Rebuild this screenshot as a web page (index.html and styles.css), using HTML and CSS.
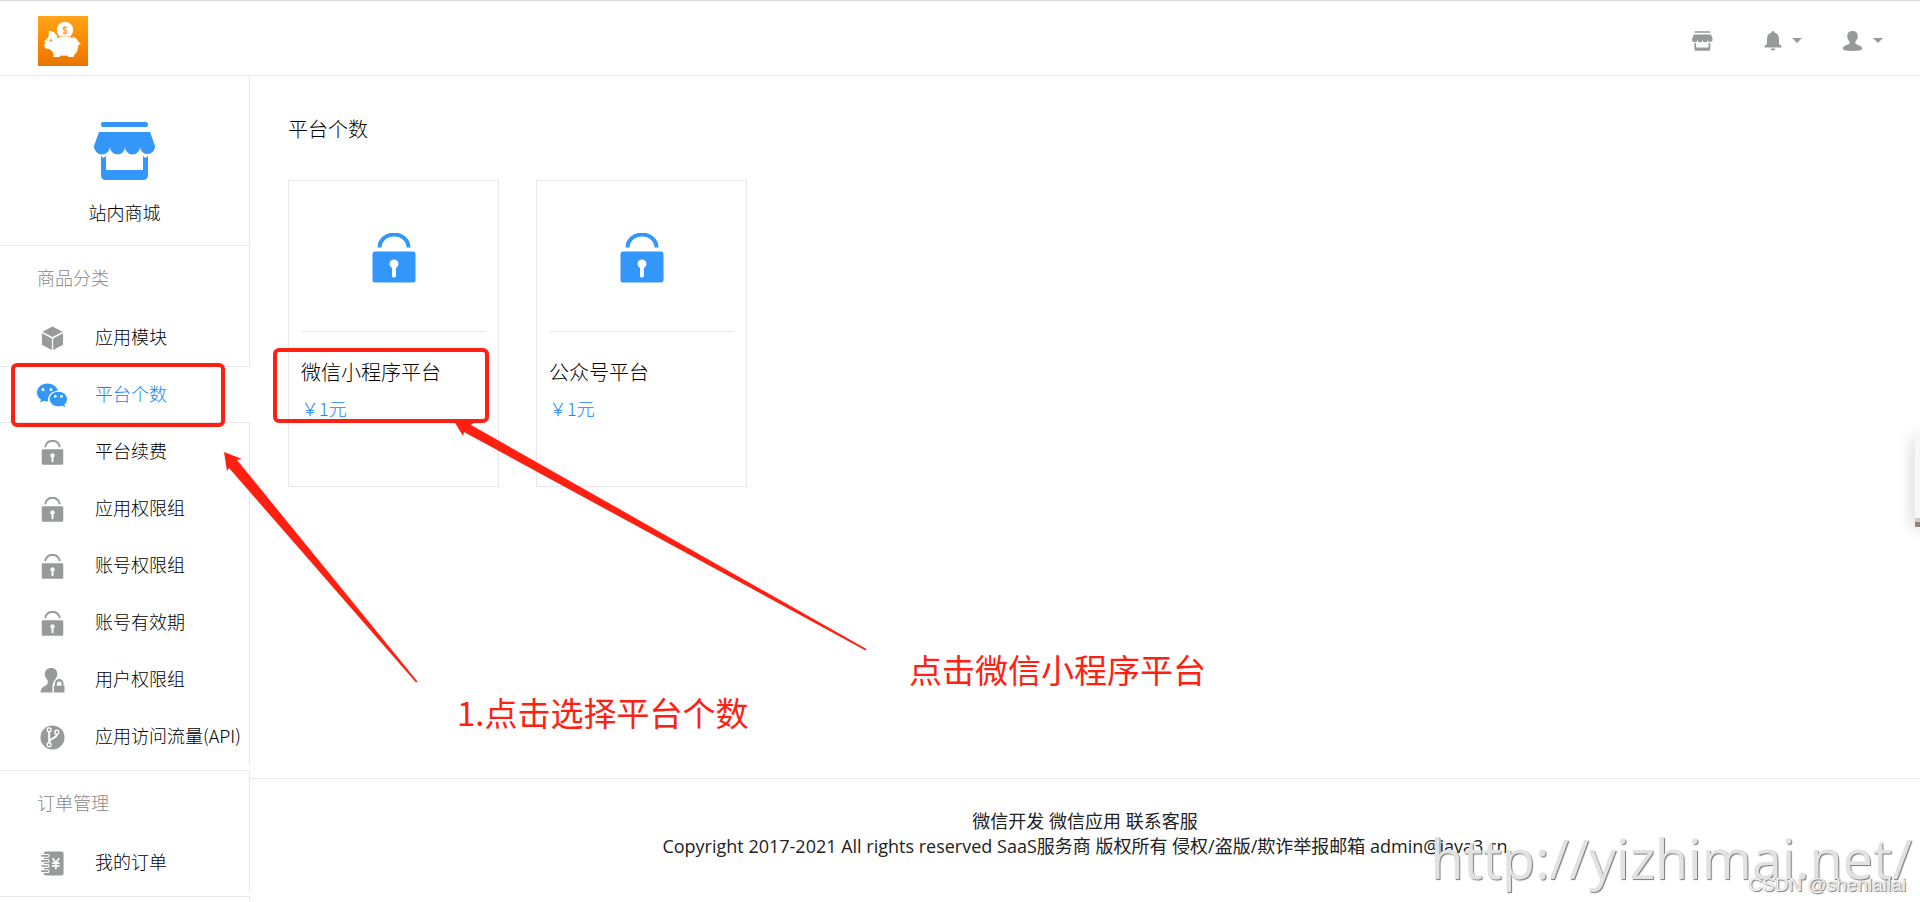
FILE: index.html
```html
<!DOCTYPE html>
<html lang="zh-CN">
<head>
<meta charset="utf-8">
<meta name="viewport" content="width=device-width, initial-scale=1">
<title>平台个数</title>
<link rel="stylesheet" href="styles.css">
</head>
<body>
<svg class="sprite" aria-hidden="true">
  <symbol id="store" viewBox="0 0 62 58">
    <rect x="7" y="0" width="47" height="5" rx="2"/>
    <path d="M5 10H56L61 24A7.500 7.500 0 0 1 46 25A7.500 7.500 0 0 1 31 25A7.500 7.500 0 0 1 16 25A7.500 7.500 0 0 1 0 24Z"/>
    <path d="M7 34L9.500 36L12 34V48H49V34L51.500 36L54 34V53Q54 58 49 58H12Q7 58 7 53Z"/>
  </symbol>
  <symbol id="lock" viewBox="0 0 44 50">
    <path d="M7.500 14.500A14.500 13 0 0 1 36.500 14.500" fill="none" stroke="currentColor" stroke-width="4"/>
    <path fill-rule="evenodd" d="M3 18.500H41Q43.500 18.500 43.500 21V47Q43.500 49.500 41 49.500H3Q.5 49.500 .5 47V21Q.5 18.500 3 18.500ZM22 26.500A4.500 4.500 0 0 0 20 35V43Q20 44.500 22 44.500T24 43V35A4.500 4.500 0 0 0 22 26.500Z"/>
  </symbol>
  <symbol id="cube" viewBox="0 0 24 26">
    <path d="M12 .5L22.500 6L12 11.500L1.500 6ZM1 7.500L11.300 13V25L1 19.500ZM23 7.500L12.700 13V25L23 19.500Z"/>
  </symbol>
  <symbol id="wechat" viewBox="0 0 31 24">
    <path fill-rule="evenodd" d="M10.500 0C4.500 0 0 4 0 9C0 12 1.500 14.500 4 16L3 19L6.500 17.300Q8.500 18 11.200 17.800C10 12 15 7.300 20.700 7.200C19.700 3 15.500 0 10.500 0ZM6 4.500A1.600 1.600 0 1 1 6 7.700A1.600 1.600 0 1 1 6 4.500ZM14 4.500A1.600 1.600 0 1 1 14 7.700A1.600 1.600 0 1 1 14 4.500Z"/>
    <path fill-rule="evenodd" d="M21.300 8.300C16.500 8.300 12.700 11.500 12.700 15.500S16.500 22.800 21.300 22.800Q23.500 22.800 25 22.200L28 23.500L27.300 21C29 19.700 30 17.800 30 15.500C30 11.500 26 8.300 21.300 8.300ZM18.300 11.500A1.400 1.400 0 1 1 18.300 14.300A1.400 1.400 0 1 1 18.300 11.500ZM24.500 11.500A1.400 1.400 0 1 1 24.500 14.300A1.400 1.400 0 1 1 24.500 11.500Z"/>
  </symbol>
  <symbol id="userlock" viewBox="0 0 26 26">
    <path d="M11.500 0C7.500 0 5 2.500 5 6.500C5 9 6.500 11 8 13V16Q7.500 17.500 4.500 19Q1 20.500 .5 25.500H13V17Q14 14.500 16 11.500C17.500 9.500 18 8 18 6.500C18 2.500 15.500 0 11.500 0Z"/>
    <path fill-rule="evenodd" d="M14.500 18.500H15.500V16A4.500 4.500 0 0 1 24.500 16V18.500H25.500V25.500H14.500ZM17.500 18.500H22.500V16.500A2.500 2.500 0 0 0 17.500 16.500Z"/>
  </symbol>
  <symbol id="fork" viewBox="0 0 26 26">
    <circle cx="13" cy="13" r="12.500"/>
    <g fill="none" stroke="#fff" stroke-width="1.400">
      <circle cx="9.500" cy="5" r="2"/><circle cx="9.500" cy="20.500" r="2"/><circle cx="17.500" cy="7.500" r="2"/>
      <path d="M9.500 7V18.500M17.500 9.500C17.500 14 11 13 9.500 17.500" stroke-width="2"/>
    </g>
  </symbol>
  <symbol id="book" viewBox="0 0 24 26">
    <path d="M5 .5H21.500Q23.500 .5 23.500 2.500V23.500Q23.500 25.500 21.500 25.500H5Q3 25.500 3 23.500V2.500Q3 .5 5 .5Z"/>
    <path d="M1 5H7M1 10.300H7M1 15.600H7M1 21H7" stroke="#fff" stroke-width="4" stroke-linecap="round"/>
    <path d="M1 5H7M1 10.300H7M1 15.600H7M1 21H7" stroke="currentColor" stroke-width="1.800" stroke-linecap="round"/>
    <path d="M12 7.500L15.500 12L19 7.500M15.500 12V19M11.500 12.500H19.500M11.500 15.500H19.500" fill="none" stroke="#fff" stroke-width="1.800"/>
  </symbol>
  <symbol id="bell" viewBox="0 0 18 20">
    <path d="M9 0Q10.500 0 10.500 1.500C13.500 2.500 15 4.500 15 8V13L17.500 15V16.500H.5V15L3 13V8C3 4.500 4.500 2.500 7.500 1.500Q7.500 0 9 0ZM6.500 17.500H11.500Q11 19.500 9 19.500T6.500 17.500Z"/>
  </symbol>
  <symbol id="user" viewBox="0 0 22 22">
    <path d="M11 .5C7.500 .5 5.500 2.500 5.500 6C5.500 8.500 6.500 10 8 11.500V14C5 15.500 .8 16 .8 19.500Q1 21.500 11 21.500T21.200 19.500C21.200 16 17 15.500 14 14V11.500C15.500 10 16.500 8.500 16.500 6C16.500 2.500 14.500 .5 11 .5Z"/>
  </symbol>
  <symbol id="caret" viewBox="0 0 10 5"><path d="M0 0H10L5 5Z"/></symbol>
</svg>

<header class="topbar">
  <a class="logo" href="#" aria-label="首页">
    <svg viewBox="0 0 50 50">
      <defs><linearGradient id="amber" x1="0" y1="0" x2="0" y2="1"><stop offset="0" stop-color="#ffa51a"/><stop offset=".6" stop-color="#fb8500"/><stop offset="1" stop-color="#e57600"/></linearGradient></defs>
      <rect width="50" height="50" fill="url(#amber)"/>
      <path fill="#fff" d="M11 14.500L16 16Q19 20.500 24 20.500H33Q39 21 40.500 26L43 27.500L40.500 29Q40 36 36.500 38.500L35.500 41H30.500L29.500 39.500Q26 40 22.500 39.500L21.500 41H15.500L15 36.500Q13.500 34 11 33L7.500 32.500L6 29.500L7.500 26H5.500L10.500 21Z"/>
      <circle cx="27" cy="14" r="8.200" fill="#fff"/>
      <path d="M20 21Q27 18.500 34 21" fill="none" stroke="#ffc77c" stroke-width="1"/>
      <circle cx="20.200" cy="20.800" r="1.400" fill="#f79a32"/><circle cx="34" cy="20.800" r="1.400" fill="#f79a32"/>
      <circle cx="12.800" cy="24.500" r="1.300" fill="#f79a32"/>
      <path d="M29 12Q28.500 11 27 11Q25 11 25 12.600Q25 14 27 14.200Q29.200 14.500 29.200 16Q29.200 17.500 27 17.500Q25.200 17.500 24.800 16.300M27 10V18.500" fill="none" stroke="#f79a32" stroke-width="1.100"/>
    </svg>
  </a>
  <nav class="tools" aria-label="工具">
    <button class="tool" type="button" aria-label="商城"><svg class="i-shop"><use href="#store"/></svg></button>
    <button class="tool" type="button" aria-label="消息"><svg class="i-bell"><use href="#bell"/></svg><svg class="i-caret"><use href="#caret"/></svg></button>
    <button class="tool" type="button" aria-label="账户"><svg class="i-user"><use href="#user"/></svg><svg class="i-caret"><use href="#caret"/></svg></button>
  </nav>
</header>

<div class="layout">
  <aside class="sidebar">
    <div class="shop">
      <svg class="shop-icon"><use href="#store"/></svg>
      <span>站内商城</span>
    </div>
    <nav class="group">
      <h2 class="group-title">商品分类</h2>
      <a class="item" href="#"><svg><use href="#cube"/></svg>应用模块</a>
      <a class="item active" href="#" aria-current="page"><svg><use href="#wechat"/></svg>平台个数</a>
      <a class="item" href="#"><svg><use href="#lock"/></svg>平台续费</a>
      <a class="item" href="#"><svg><use href="#lock"/></svg>应用权限组</a>
      <a class="item" href="#"><svg><use href="#lock"/></svg>账号权限组</a>
      <a class="item" href="#"><svg><use href="#lock"/></svg>账号有效期</a>
      <a class="item" href="#"><svg><use href="#userlock"/></svg>用户权限组</a>
      <a class="item" href="#"><svg><use href="#fork"/></svg>应用访问流量(API)</a>
    </nav>
    <nav class="group">
      <h2 class="group-title">订单管理</h2>
      <a class="item" href="#"><svg><use href="#book"/></svg>我的订单</a>
    </nav>
    <div class="rest"></div>
  </aside>

  <div class="content">
    <main class="main">
      <h1 class="title">平台个数</h1>
      <div class="cards">
        <a class="card" href="#">
          <span class="cover"><svg><use href="#lock"/></svg></span>
          <span class="name">微信小程序平台</span>
          <span class="price">￥1元</span>
        </a>
        <a class="card" href="#">
          <span class="cover"><svg><use href="#lock"/></svg></span>
          <span class="name">公众号平台</span>
          <span class="price">￥1元</span>
        </a>
      </div>
    </main>
    <footer class="footer">
      <div><a href="#">微信开发</a> <a href="#">微信应用</a> <a href="#">联系客服</a></div>
      <div>Copyright 2017-2021 All rights reserved SaaS服务商 版权所有 侵权/盗版/欺诈举报邮箱 admin@java3.cn</div>
    </footer>
  </div>
</div>

<div class="peek"></div>

<svg class="marks" aria-hidden="true">
  <g fill="none" stroke="#ff2012" stroke-width="4">
    <rect x="13" y="365" width="210" height="60" rx="4"/>
    <rect x="275" y="350" width="212" height="71" rx="4"/>
  </g>
  <g fill="#ff2012">
    <path d="M224 452L242 459L237 460L417.500 681.500L416 682.500L229 468L227 471Z"/>
    <path d="M454 421L476 421L471 425L866.500 649L865.500 650.500L464 432L463 436Z"/>
  </g>
</svg>
<p class="note note-one">1.点击选择平台个数</p>
<p class="note note-two">点击微信小程序平台</p>
<p class="stamp">http://yizhimai.net/</p>
<p class="credit">CSDN @shenlailai</p>
</body>
</html>
```
FILE: styles.css
```css
* { box-sizing: border-box; }

body {
  margin: 0;
  height: 100vh;
  display: flex;
  flex-direction: column;
  overflow: hidden;
  position: relative;
  background: #fff;
  color: #000;
  font: 300 18px/25px "Noto Sans CJK SC", sans-serif;
}

a { color: inherit; text-decoration: none; }
h1, h2, p { margin: 0; font-weight: 300; }
svg { fill: currentColor; display: block; }
.sprite { position: absolute; width: 0; height: 0; }

.topbar {
  flex: none;
  height: 76px;
  padding: 0 37px 0 38px;
  display: flex;
  align-items: center;
  justify-content: space-between;
  border-top: 1px solid #dadada;
  border-bottom: 1px solid #e7e7eb;
}
.logo svg { width: 50px; height: 50px; margin-top: 6px; }
.logo { height: 56px; }
.tools { display: flex; gap: 40px; color: #98999a; }
.tools .tool:first-child { margin-right: 11px; }
.tool {
  display: flex;
  align-items: center;
  gap: 10px;
  padding: 0;
  margin: 5px 0 0;
  border: 0;
  background: none;
  color: inherit;
}
.i-shop { width: 21px; height: 20px; }
.i-bell { width: 18px; height: 20px; }
.i-user { width: 21px; height: 22px; }
.i-caret { width: 10px; height: 5px; }

.layout { flex: 1; min-height: 0; display: flex; }

.sidebar { flex: none; width: 250px; display: flex; flex-direction: column; }
.shop {
  height: 170px;
  padding-top: 46px;
  display: flex;
  flex-direction: column;
  align-items: center;
  gap: 20px;
  border-right: 1px solid #e7e7eb;
  border-bottom: 1px solid #e7e7eb;
}
.shop-icon { width: 62px; height: 58px; color: #3296fa; }
.group { padding-bottom: 5px; border-bottom: 1px solid #e7e7eb; }
.group-title {
  height: 63px;
  padding: 19px 37px;
  border-right: 1px solid #e7e7eb;
  color: #888;
  font-size: 18px;
}
.item {
  height: 57px;
  padding: 0 0 3px 37px;
  display: flex;
  align-items: center;
  gap: 27px;
  white-space: nowrap;
  border-right: 1px solid #e7e7eb;
}
.item svg { flex: none; width: 31px; height: 25px; margin-top: 4px; color: #98999a; }
.item.active {
  color: #1684f5;
  border-top: 1px solid #e7e7eb;
  border-bottom: 1px solid #e7e7eb;
  border-right-color: transparent;
}
.item.active svg { color: #3296fa; }
.rest { flex: 1; border-right: 1px solid #e7e7eb; }

.content { flex: 1; display: flex; flex-direction: column; }
.main { flex: 1; padding: 40px 38px; }
.title { font-size: 20px; line-height: 26px; }
.cards { display: flex; gap: 37px; margin-top: 38px; }
.card {
  width: 211px;
  height: 307px;
  padding: 0 12px;
  border: 1px solid #e7e7eb;
  display: flex;
  flex-direction: column;
}
.cover {
  height: 151px;
  padding-top: 4px;
  display: flex;
  align-items: center;
  justify-content: center;
  border-bottom: 1px solid #e7e7eb;
  color: #3296fa;
}
.cover svg { width: 44px; height: 50px; }
.name { margin-top: 27px; font-size: 20px; }
.price { margin-top: 12px; color: #1684f5; }

.footer {
  height: 124px;
  padding-top: 30px;
  border-top: 1px solid #e7e7eb;
  text-align: center;
  font-family: "Open Sans", "Noto Sans CJK SC", sans-serif;
  font-weight: 400;
  color: #222;
}

.peek {
  position: absolute;
  right: 0;
  top: 437px;
  width: 5px;
  height: 90px;
  background: linear-gradient(#f8f8f2 0 81px, #d8c8b8 81px 85px, #8d8678 85px);
  box-shadow: 0 0 16px #00000060;
}

.marks { position: absolute; inset: 0; width: 100%; height: 100%; pointer-events: none; }
.note {
  position: absolute;
  color: #ff2012;
  font-size: 33px;
  line-height: 44px;
  font-weight: 400;
  white-space: nowrap;
}
.note-one { left: 457px; top: 690px; }
.note-two { left: 909px; top: 647px; }
.stamp {
  position: absolute;
  right: 8px;
  top: 822px;
  font: 400 54px/72px "Open Sans", sans-serif;
  color: #e2e2e2;
  text-shadow: 1px 1px 1px #777;
}
.credit {
  position: absolute;
  right: 14px;
  top: 872px;
  font: 400 19px/26px "Liberation Sans", sans-serif;
  color: #f4f4f4;
  text-shadow: 1px 1px 1px #777, 0 0 1px #999;
}
```
